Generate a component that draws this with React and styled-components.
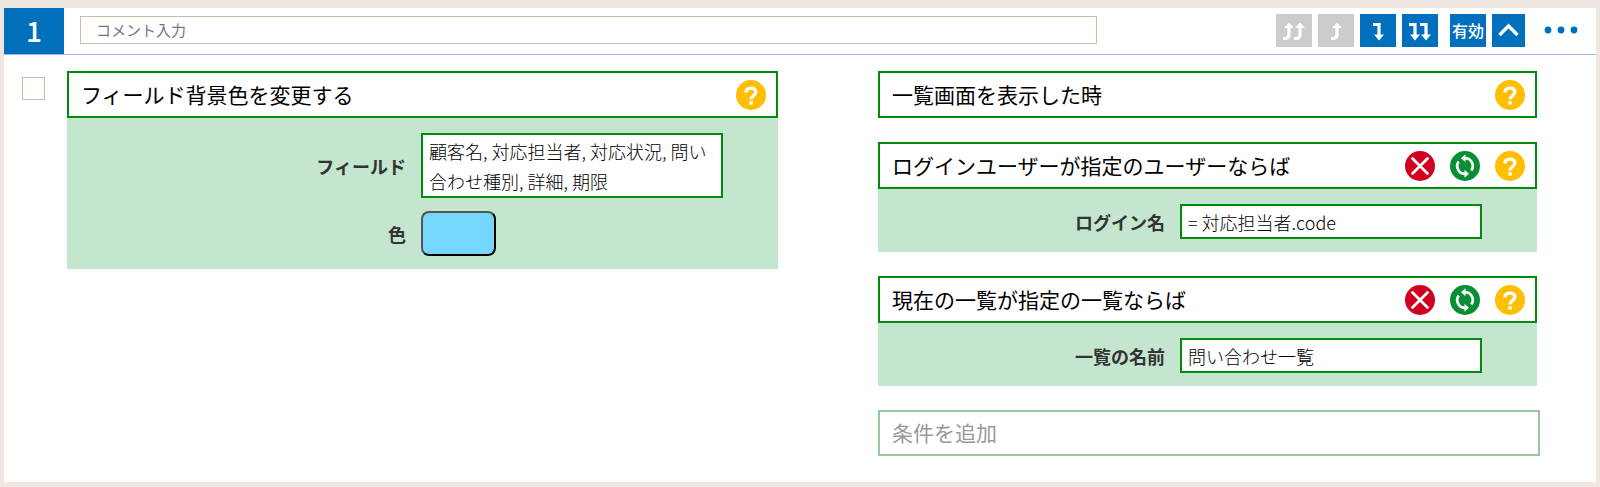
import React, { useState } from "react";
import styled, { createGlobalStyle } from "styled-components";

const actionParams = [
  {
    id: "field",
    label: "フィールド",
    type: "text",
    rows: 2,
    value: "顧客名, 対応担当者, 対応状況, 問い合わせ種別, 詳細, 期限",
  },
  { id: "color", label: "色", type: "color", value: "#75d7ff" },
];

const conditions = [
  { title: "一覧画面を表示した時", params: [] },
  {
    title: "ログインユーザーが指定のユーザーならば",
    removable: true,
    params: [
      { id: "login", label: "ログイン名", type: "text", value: "= 対応担当者.code" },
    ],
  },
  {
    title: "現在の一覧が指定の一覧ならば",
    removable: true,
    params: [
      { id: "view", label: "一覧の名前", type: "text", value: "問い合わせ一覧" },
    ],
  },
];

export default function App() {
  const [comment, setComment] = useState("");

  return (
    <>
      <GlobalStyle />
      <Panel>
        <Header>
          <RowNumber>1</RowNumber>
          <CommentInput
            aria-label="コメント入力"
            placeholder="コメント入力"
            value={comment}
            onChange={(e) => setComment(e.target.value)}
          />
          <Toolbar>
            <ToolButton disabled aria-label="先頭へ移動">
              <DoubleArrow up />
            </ToolButton>
            <ToolButton disabled aria-label="上へ移動">
              <SingleArrow up />
            </ToolButton>
            <ToolButton aria-label="下へ移動">
              <SingleArrow />
            </ToolButton>
            <ToolButton aria-label="末尾へ移動">
              <DoubleArrow />
            </ToolButton>
            <ToolButton $spaced>有効</ToolButton>
            <ToolButton $narrow aria-label="折りたたむ">
              <svg width="33" height="33" viewBox="0 0 33 33">
                <path
                  d="M7.5 21 16.500 12 25.500 21"
                  fill="none"
                  stroke="#fff"
                  strokeWidth="3.4"
                />
              </svg>
            </ToolButton>
            <MenuButton aria-label="メニュー">
              <svg width="34" height="8" viewBox="0 0 34 8">
                <circle cx="4" cy="4" r="3.4" />
                <circle cx="17" cy="4" r="3.4" />
                <circle cx="30" cy="4" r="3.4" />
              </svg>
            </MenuButton>
          </Toolbar>
        </Header>

        <Body>
          <CheckBox type="checkbox" aria-label="選択" />
          <Columns>
            <Column>
              <Card title="フィールド背景色を変更する" params={actionParams} />
            </Column>
            <Column>
              {conditions.map((condition) => (
                <Card key={condition.title} {...condition} />
              ))}
              <AddButton>条件を追加</AddButton>
            </Column>
          </Columns>
        </Body>
      </Panel>
    </>
  );
}

function Card({ title, removable, params }) {
  return (
    <section>
      <CardHead>
        <CardTitle>{title}</CardTitle>
        {removable && (
          <>
            <RoundButton $color="#d00020" aria-label="削除">
              <CloseIcon />
            </RoundButton>
            <RoundButton $color="#088e33" aria-label="変更">
              <SyncIcon />
            </RoundButton>
          </>
        )}
        <RoundButton $color="#ffbe00" aria-label="ヘルプ">
          <HelpIcon />
        </RoundButton>
      </CardHead>
      {params.length > 0 && (
        <CardBody>
          {params.map((param) => (
            <ParamRow key={param.id}>
              <ParamLabel htmlFor={param.id}>{param.label}</ParamLabel>
              <ParamField>
                <ParamValue param={param} />
              </ParamField>
            </ParamRow>
          ))}
        </CardBody>
      )}
    </section>
  );
}

function ParamValue({ param }) {
  if (param.type === "color") {
    return <Swatch id={param.id} $color={param.value} />;
  }
  if (param.rows) {
    return <TextArea id={param.id} rows={param.rows} defaultValue={param.value} />;
  }
  return <TextInput id={param.id} defaultValue={param.value} />;
}

// x is the centre of the stem
function ArrowShape({ x, up }) {
  if (up) {
    return (
      <g>
        <path
          d={`M${x - 6} 24.500h2.500q3.500-.5 3.500-4V13`}
          fill="none"
          stroke="#fff"
          strokeWidth="3.2"
        />
        <path d={`M${x - 5} 14 ${x} 8.500 ${x + 5} 14z`} />
      </g>
    );
  }
  return (
    <g>
      <path
        d={`M${x - 6} 10.500H${x}V21`}
        fill="none"
        stroke="#fff"
        strokeWidth="3.2"
      />
      <path d={`M${x - 5} 20.500h10l-5 6z`} />
    </g>
  );
}

function SingleArrow({ up }) {
  return (
    <svg width="36" height="33" viewBox="0 0 36 33">
      <ArrowShape x={19} up={up} />
    </svg>
  );
}

function DoubleArrow({ up }) {
  return (
    <svg width="36" height="33" viewBox="0 0 36 33">
      <ArrowShape x={13} up={up} />
      <ArrowShape x={24} up={up} />
    </svg>
  );
}

function CloseIcon() {
  return (
    <svg width="30" height="30" viewBox="0 0 30 30">
      <path
        d="M7.500 7.500 22.500 22.500M22.500 7.500 7.500 22.500"
        stroke="#fff"
        strokeWidth="2.800"
        strokeLinecap="round"
      />
    </svg>
  );
}

function SyncIcon() {
  return (
    <svg width="30" height="30" viewBox="0 0 30 30">
      <g fill="none" stroke="#fff" strokeWidth="2.700">
        <path d="M14.500 7.200a7.800 7.800 0 0 1 6.800 12.300" />
        <path d="M15.500 22.800a7.800 7.800 0 0 1-6.800-12.300" />
      </g>
      <path fill="#fff" d="M15.500 3.200v8L11 7.200zM14.500 18.800v8l4.500-4z" />
    </svg>
  );
}

function HelpIcon() {
  return (
    <svg width="30" height="30" viewBox="0 0 30 30">
      <path
        d="M10 12.500c0-2.900 2-4.400 4.900-4.400s4.900 1.500 4.900 4c0 3.300-4.700 3.500-4.700 7.400"
        fill="none"
        stroke="#fff"
        strokeWidth="3.400"
      />
      <rect x="13.300" y="21.200" width="3.500" height="3.400" fill="#fff" />
    </svg>
  );
}

const GlobalStyle = createGlobalStyle`
  * {
    box-sizing: border-box;
  }

  body {
    margin: 0;
    padding: 8px 4px 5px;
    background-color: #eee6e0;
    color: #000;
    font-family: "Noto Sans CJK JP", sans-serif;
  }

  button, input, textarea {
    margin: 0;
    font-family: inherit;
  }

  svg {
    display: block;
  }
`;

const Panel = styled.main`
  background-color: #fff;
`;

const Header = styled.header`
  display: flex;
  align-items: center;
  height: 47px;
  border-bottom: 1px solid #a3b5e0;
`;

const RowNumber = styled.div`
  display: flex;
  align-items: center;
  justify-content: center;
  align-self: stretch;
  width: 60px;
  margin-right: 16px;
  padding-bottom: 2px;
  background-color: #0070bd;
  color: #fff;
  font-size: 28px;
  font-weight: 500;
  line-height: 44px;
`;

const CommentInput = styled.input`
  flex: 1;
  min-width: 0;
  height: 28px;
  margin-bottom: 2px;
  padding: 0 15px 2px;
  border: 1px solid #cdbba7;
  border-radius: 0;
  background-color: #fff;
  font-size: 15px;

  &::placeholder {
    color: #757575;
  }
`;

const Toolbar = styled.div`
  display: flex;
  align-items: center;
  gap: 6px;
  margin: 0 18px 2px 179px;
`;

const ToolButton = styled.button`
  display: flex;
  align-items: center;
  justify-content: center;
  width: ${(props) => (props.$narrow ? "33px" : "36px")};
  height: 33px;
  margin-left: ${(props) => (props.$spaced ? "6px" : "0")};
  padding: 0;
  border: none;
  background-color: #0070bd;
  color: #fff;
  font-size: 16px;
  font-weight: 500;
  white-space: nowrap;
  cursor: pointer;

  svg {
    fill: #fff;
  }

  &:disabled {
    background-color: #ccc;
    cursor: default;
  }
`;

const MenuButton = styled.button`
  margin-left: 13px;
  padding: 0;
  border: none;
  background: none;
  cursor: pointer;

  svg {
    fill: #0070bd;
  }
`;

const Body = styled.div`
  display: flex;
  align-items: flex-start;
  padding: 16px 59px 26px 18px;
`;

const CheckBox = styled.input`
  appearance: none;
  flex: none;
  width: 23px;
  height: 23px;
  margin: 6px 22px 0 0;
  border: 1px solid #cdbba7;
  background-color: #fff;

  &:checked {
    background-color: #0070bd;
  }
`;

const Columns = styled.div`
  display: grid;
  grid-template-columns: minmax(0, 711fr) minmax(0, 659fr);
  flex: 1;
  align-items: start;
  gap: 100px;
`;

const Column = styled.div`
  display: flex;
  flex-direction: column;
  gap: 24px;
`;

const CardHead = styled.div`
  display: flex;
  align-items: center;
  gap: 15px;
  height: 47px;
  padding: 0 10px 0 12px;
  border: 2px solid #008a0e;
  background-color: #fff;
`;

const CardTitle = styled.h2`
  flex: 1;
  margin: 0;
  padding-bottom: 2px;
  font-size: 21px;
  font-weight: 400;
  line-height: 30px;
`;

const RoundButton = styled.button`
  width: 30px;
  height: 30px;
  padding: 0;
  border: none;
  border-radius: 50%;
  background-color: ${(props) => props.$color};
  cursor: pointer;
`;

const CardBody = styled.div`
  display: flex;
  flex-direction: column;
  gap: 13px;
  padding: 15px 55px 13px 15px;
  background-color: #c4e6cf;
`;

const ParamRow = styled.div`
  display: flex;
  align-items: center;
  justify-content: flex-end;
  gap: 15px;
`;

const ParamLabel = styled.label`
  color: #333;
  font-size: 18px;
  font-weight: 700;
  line-height: 30px;
`;

const ParamField = styled.div`
  width: 302px;
`;

const TextInput = styled.input`
  display: block;
  width: 100%;
  height: 35px;
  padding: 1px 6px 0;
  border: 2px solid #008a0e;
  border-radius: 0;
  background-color: #fff;
  color: #000;
  font-size: 18px;
  font-weight: 300;
  line-height: 30px;
`;

const TextArea = styled(TextInput).attrs({ as: "textarea" })`
  height: auto;
  resize: none;
  overflow: hidden;
`;

const Swatch = styled.button`
  display: block;
  width: 75px;
  height: 45px;
  border: 2px outset #000;
  border-radius: 8px;
  background-color: ${(props) => props.$color};
`;

const AddButton = styled.button`
  width: calc(100% + 3px);
  height: 46px;
  padding: 0 12px 2px;
  border: 2px solid #96c8a0;
  background-color: #fff;
  color: #999;
  font-size: 21px;
  text-align: left;
  cursor: pointer;
`;
